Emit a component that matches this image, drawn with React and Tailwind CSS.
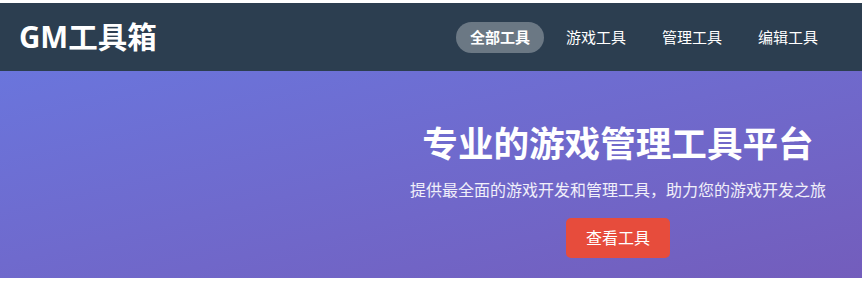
import React from "react";

const font = { fontFamily: '"Noto Sans", "Noto Sans CJK SC", sans-serif' };

function App() {
  const links = ["全部工具", "游戏工具", "管理工具", "编辑工具"];

  return (
    <div className="w-[862px] bg-white pt-[3px]" style={font}>

      {/* HEADER */}
      <header className="h-[68px] bg-[#2c3e50] flex items-center justify-between pl-[19px] pr-[30px]">
        <div className="text-white text-[29.5px] font-bold leading-none">GM工具箱</div>
        <nav className="flex items-center gap-[8px]">
          {links.map((l, i) => (
            <a
              key={l}
              className={
                "px-[14px] h-[31px] flex items-center rounded-full text-white text-[15px] " +
                (i === 0 ? "bg-white/30 font-bold" : "font-normal")
              }
            >
              {l}
            </a>
          ))}
        </nav>
      </header>

      {/* HERO */}
      <section className="h-[207px] bg-gradient-to-br from-[#6a75dc] to-[#735dbc] flex">
        <div className="flex-1"></div>
        <div className="w-[488px] flex flex-col items-center pt-[51px]">
          <h1 className="text-white text-[35.6px] font-bold leading-[42px] whitespace-nowrap">
            专业的游戏管理工具平台
          </h1>
          <p className="mt-[14px] text-white/90 text-[16px] leading-[25px] whitespace-nowrap">
            提供最全面的游戏开发和管理工具，助力您的游戏开发之旅
          </p>
          <button className="mt-[15px] h-[40px] w-[104px] rounded-[5px] bg-[#e74c3c] text-white text-[16px]">
            查看工具
          </button>
        </div>
      </section>

      <div className="h-[7px]"></div>
    </div>
  );
}

export default App;
